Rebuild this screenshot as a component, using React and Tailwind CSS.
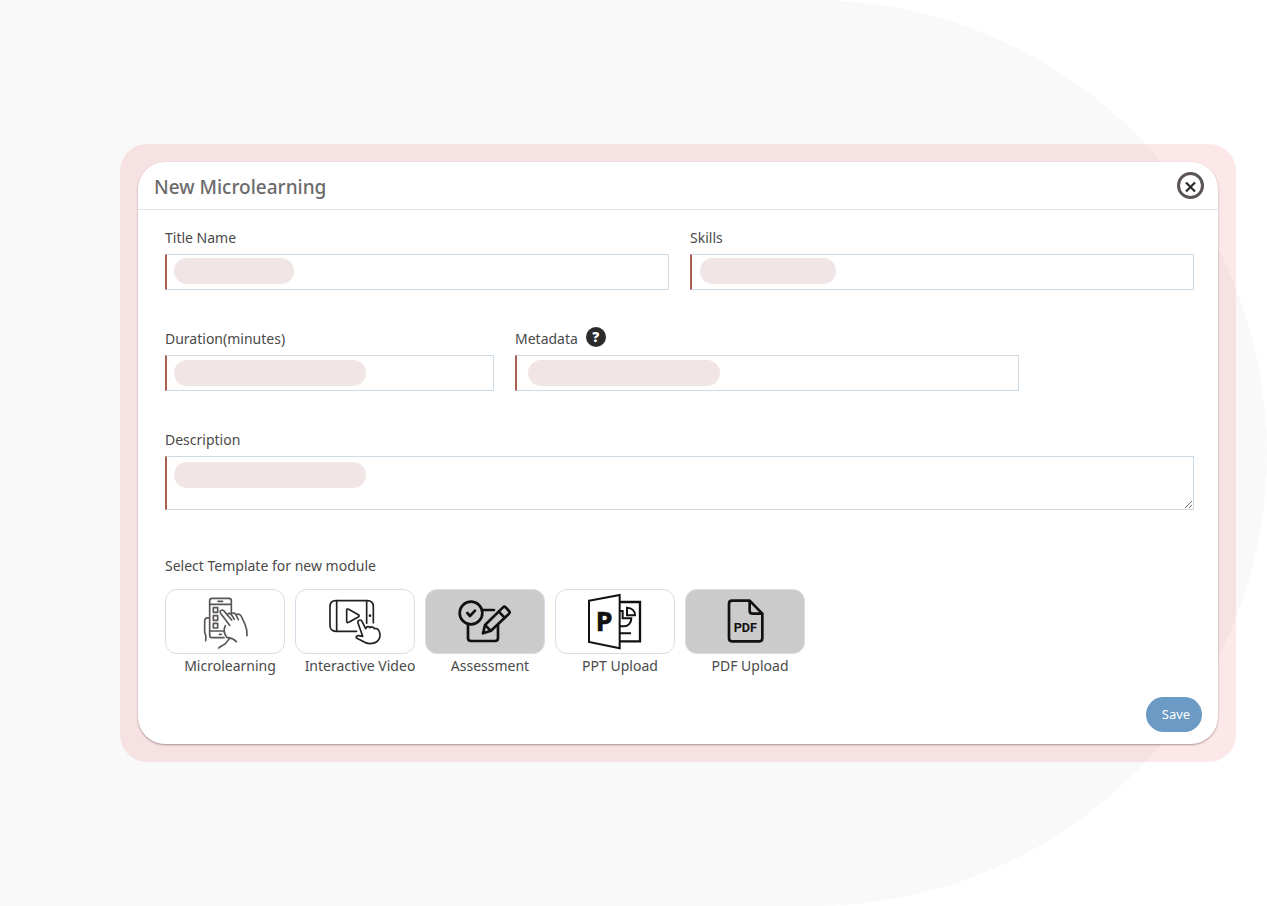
import React from "react";

const stroke = {
  fill: "none",
  strokeLinecap: "round",
  strokeLinejoin: "round",
};

function IconFrame({ children }) {
  return (
    <svg viewBox="18 30 354 189" className="block h-full w-full" aria-hidden="true">
      {children}
    </svg>
  );
}

function PhoneHandIcon() {
  return (
    <IconFrame>
      <g {...stroke} stroke="#5a5557" strokeWidth="5">
        <path d="M192 173H156q-7 0-7-7V62q0-7 7-7h51q7 0 7 7v38" />
        <path d="M149 73h65M149 153h44M174 64h14M178 163h6" />
        <rect x="160" y="83" width="13" height="14" />
        <rect x="160" y="107" width="13" height="14" />
        <rect x="160" y="130" width="13" height="14" />
        <path d="M148 114c-9-2-14 1-14 9v32c0 8 7 10 3 27" />
        <path d="M209 136L181 99c-3-6 4-12 10-7l24 28M202 104c4-7 10-4 13 1l8 13M214 101c6-4 11-2 14 4l7 14M229 104c8-4 13 0 16 7l10 22c4 9 7 16 6 34" />
        <path d="M196 137c-6 12-4 24 4 34M200 172c12 1 22 5 29 13M212 174c-8 3-10 11-15 16-6 6-14 7-21 14" />
      </g>
    </IconFrame>
  );
}

function VideoTouchIcon() {
  return (
    <IconFrame>
      <g {...stroke} stroke="#221f24" strokeWidth="5">
        <path d="M200 154h-62q-18 0-18-18V80q0-18 18-18h93q19 0 19 18v48" />
        <path d="M140 62v92M230 62v68" />
        <path d="M170 91v33q0 6 6 3l29-16q5-4 0-7l-29-16q-6-3-6 3z" />
        <path d="M218 169l-14-40c-3-9 9-12 12-5l11 22c3-7 9-8 13-3 6-4 11-2 13 3 9-2 14 4 16 12 5 20-9 33-30 33-16 0-24-11-36-15-8-3-4-10 3-9z" fill="#fff" />
      </g>
      <circle cx="240" cy="107" r="4" fill="#221f24" />
    </IconFrame>
  );
}

function AssessmentIcon() {
  return (
    <IconFrame>
      <g {...stroke} stroke="#111" strokeWidth="8">
        <path d="M144 132v42q0 9 9 9h72q9 0 9-9v-39M188 90h34" />
        <circle cx="153" cy="99" r="34" />
        <path d="M142 99l8 9 15-16" />
        <path d="M189 160l6-25 54-53q4-4 8 0l10 11q4 4 0 8l-54 51z" fill="#cbcbcb" />
        <path d="M196 136l16 16M236 95l18 18" />
      </g>
    </IconFrame>
  );
}

function PptIcon() {
  return (
    <IconFrame>
      <g fill="none" stroke="#111" strokeWidth="6">
        <path d="M209 66h61v118h-61" strokeWidth="7" />
        <path d="M209 93h9v22h26c0 14-10 24-23 24h-12M209 160h34" />
        <path d="M231 83v23h24c0-13-9-23-24-23z" />
        <path d="M117 62l92-17v160l-92-19z" fill="#fff" />
      </g>
      <text
        x="137"
        y="154"
        fontFamily="Open Sans, sans-serif"
        fontWeight="700"
        fontSize="80"
        fill="#111"
        stroke="#111"
        strokeWidth="2"
      >
        P
      </text>
    </IconFrame>
  );
}

function PdfIcon() {
  return (
    <IconFrame>
      <g {...stroke} stroke="#111" strokeWidth="8">
        <path d="M209 62h-53q-9 0-9 9v104q0 9 9 9h82q9 0 9-9V101z" />
        <path d="M209 63v29q0 9 9 9h28" />
      </g>
      <text x="161" y="157" fontFamily="Roboto, sans-serif" fontWeight="700" fontSize="38" fill="#111">PDF</text>
    </IconFrame>
  );
}

const templates = [
  { name: "Microlearning", Icon: PhoneHandIcon, shaded: false },
  { name: "Interactive Video", Icon: VideoTouchIcon, shaded: false },
  { name: "Assessment", Icon: AssessmentIcon, shaded: true },
  { name: "PPT Upload", Icon: PptIcon, shaded: false },
  { name: "PDF Upload", Icon: PdfIcon, shaded: true },
];

const control =
  "block w-full border border-l-2 border-[#cdd9e3] border-l-[#a9604f] bg-white px-2 text-sm text-[#4a4a4a] outline-none";

function Field({ id, label, span, pill, help, multiline }) {
  return (
    <div className={span}>
      <div className="flex h-6 items-center gap-2">
        <label htmlFor={id} className="text-sm">
          {label}
        </label>
        {help}
      </div>
      <div className="relative mt-1">
        {multiline ? (
          <textarea id={id} className={`${control} h-[54px] resize-y`} />
        ) : (
          <input id={id} type="text" className={`${control} h-9`} />
        )}
        <span className={`pointer-events-none absolute h-[26px] rounded-full bg-[#f1e5e5] ${pill}`} />
      </div>
    </div>
  );
}

export default function App() {
  return (
    <div className="relative isolate flex min-h-screen items-center bg-white py-12 pr-[31px] pl-[120px] font-['Noto_Sans',sans-serif] text-[#4a4a4a]">
      <div className="absolute inset-y-0 left-0 -z-10 w-full rounded-r-full bg-[#f9f9f9]" />
      <div className="w-full rounded-[27px] bg-[#e61a28]/10 p-[18px]">
        <main className="rounded-[27px] bg-white shadow-[0_1px_2px_rgba(60,20,20,0.4)]">
          <header className="flex h-12 items-center justify-between border-b border-[#dfe3e6] pr-[14px] pl-4">
            <h1 className="pt-1 text-[19px] font-medium text-[#6b6b6b]">New Microlearning</h1>
            <button type="button" aria-label="Close">
              <svg viewBox="0 0 27 27" className="block size-[27px]" aria-hidden="true">
                <circle cx="13.5" cy="13.5" r="12" fill="none" stroke="#5a5359" strokeWidth="3" />
                <path d="M9 10.5l9 9M18 10.5l-9 9" stroke="#2b2b2b" strokeWidth="2.2" />
              </svg>
            </button>
          </header>

          <form className="pt-4" onSubmit={(e) => e.preventDefault()}>
            <div className="grid grid-cols-12 gap-x-[21px] gap-y-[37px] pr-6 pl-[27px]">
              <Field id="title" label="Title Name" span="col-span-6" pill="top-1 left-[9px] w-[120px]" />
              <Field id="skills" label="Skills" span="col-span-6" pill="top-1 left-[10px] w-[136px]" />
              <Field id="duration" label="Duration(minutes)" span="col-span-4" pill="top-[5px] left-[9px] w-[192px]" />
              <Field
                id="metadata"
                label="Metadata"
                span="col-span-6"
                pill="top-[5px] left-[13px] w-[192px]"
                help={
                  <button
                    type="button"
                    aria-label="About metadata"
                    className="mb-1 flex size-5 items-center justify-center rounded-full bg-[#2b2b2b] text-sm font-black text-white"
                  >
                    ?
                  </button>
                }
              />
              <Field id="description" label="Description" span="col-span-12" pill="top-[6px] left-[9px] w-[192px]" multiline />
            </div>

            <section className="mt-11 pl-[27px]">
              <h2 className="text-sm leading-6">Select Template for new module</h2>
              <div className="mt-[11px] flex flex-wrap">
                {templates.map(({ name, Icon, shaded }) => (
                  <div key={name} className="w-[130px]">
                    <button
                      type="button"
                      aria-label={name}
                      className={`block h-[65px] w-[120px] rounded-xl border border-[#d5dee6] ${shaded ? "bg-[#cbcbcb]" : "bg-white"}`}
                    >
                      <Icon />
                    </button>
                    <p className="text-center text-sm leading-6 whitespace-nowrap">{name}</p>
                  </div>
                ))}
              </div>
            </section>

            <div className="flex justify-end pt-[19px] pr-4 pb-3">
              <button type="submit" className="h-[35px] w-14 rounded-full bg-[#6b9ac4] pl-1 text-[13px] text-white">
                Save
              </button>
            </div>
          </form>
        </main>
      </div>
    </div>
  );
}
